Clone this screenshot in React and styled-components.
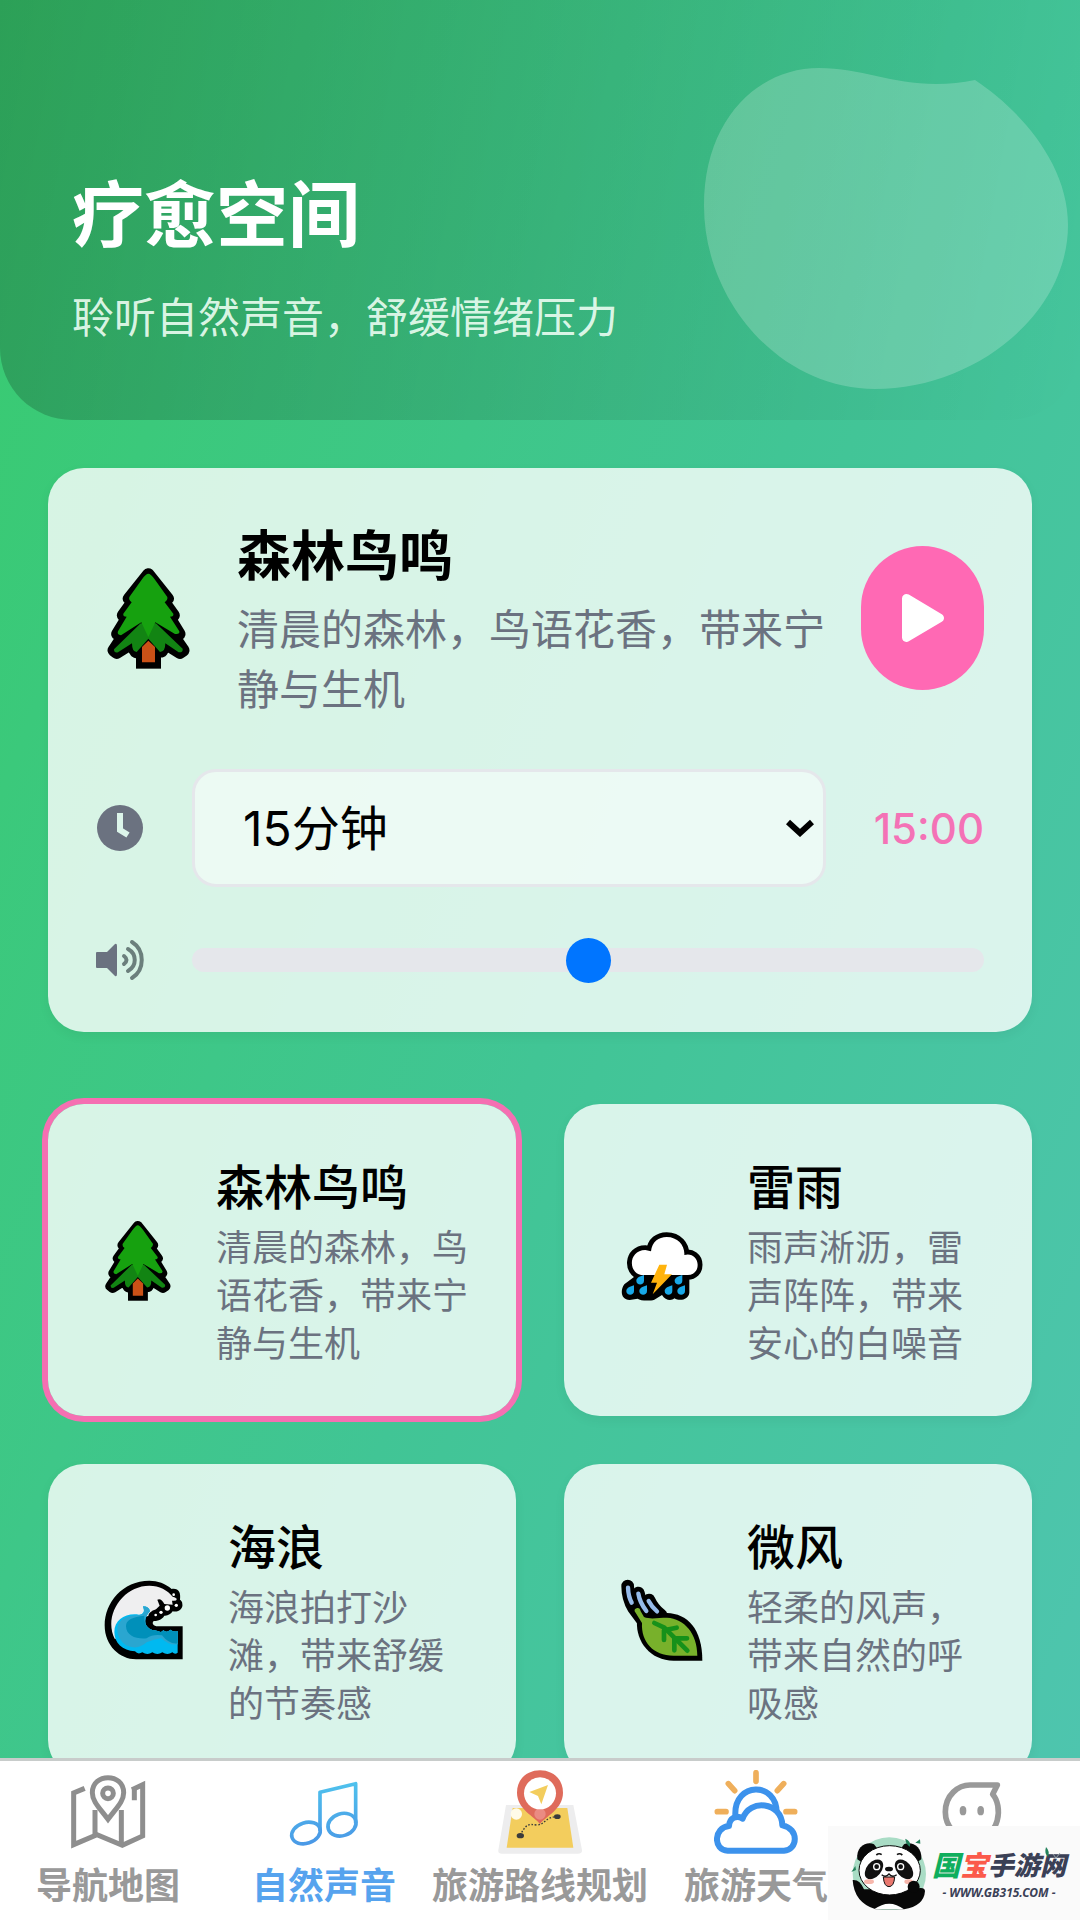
import React, { useState } from "react";
import styled, { createGlobalStyle } from "styled-components";
import { FaPlay } from "react-icons/fa";

const GlobalStyle = createGlobalStyle`
  * {
    box-sizing: border-box;
  }
  body {
    margin: 0;
    font-family: Inter, "Noto Sans CJK SC", sans-serif;
    color: #000;
  }
  h1, h2, h3, p {
    margin: 0;
  }
`;

const Page = styled.div`
  height: 100vh;
  display: flex;
  flex-direction: column;
  background: linear-gradient(112deg, #38cb6e 0%, #41c595 52%, #4fc5b0 100%);
`;

const Main = styled.main`
  flex: 1;
  min-height: 0;
  overflow-y: auto;
  scrollbar-width: none;
`;

const Header = styled.header`
  position: relative;
  padding: 170px 72px 72px;
  color: #fff;
  border-radius: 0 0 72px 72px;
  background: linear-gradient(100deg, rgba(0, 0, 0, 0.21), rgba(0, 0, 0, 0));
`;

const Blob = styled.svg`
  position: absolute;
  top: 68px;
  right: 12px;
  width: 364px;
  height: 321px;
`;

const Title = styled.h1`
  margin-bottom: 28px;
  font-size: 72px;
  line-height: 90px;
  font-weight: 700;
`;

const Subtitle = styled.p`
  font-size: 42px;
  line-height: 60px;
  color: rgba(240, 255, 245, 0.9);
`;

const Content = styled.div`
  display: flex;
  flex-direction: column;
  gap: 72px;
  padding: 48px;
`;

const Player = styled.section`
  display: flex;
  flex-direction: column;
  gap: 48px;
  padding: 48px;
  border-radius: 36px;
  background: rgba(255, 255, 255, 0.8);
  box-shadow: 0 4px 12px rgba(0, 0, 0, 0.05);
`;

const PlayerTop = styled.div`
  display: flex;
  align-items: center;
  gap: 36px;
`;

const Emoji = styled.div`
  flex: none;
  display: flex;
  justify-content: center;
  width: ${(props) => props.$width}px;
  svg {
    height: ${(props) => props.$height}px;
  }
`;

const PlayerText = styled.div`
  flex: 1;
`;

const PlayerName = styled.h2`
  margin-bottom: 2px;
  font-size: 54px;
  line-height: 82px;
  font-weight: 700;
`;

const PlayerDesc = styled.p`
  font-size: 42px;
  line-height: 60px;
  color: #6b7280;
`;

const PlayButton = styled.button`
  flex: none;
  display: flex;
  align-items: center;
  justify-content: center;
  width: 123px;
  height: 144px;
  padding: 0;
  border: none;
  border-radius: 999px;
  color: #fff;
  background: #ff69b4;
  cursor: pointer;
`;

const Row = styled.div`
  display: flex;
  align-items: center;
  gap: 48px;
  min-height: ${(props) => props.$height}px;
`;

const RowLabel = styled.label`
  flex: none;
  display: flex;
  width: 48px;
`;

const SelectBox = styled.div`
  flex: 1;
  position: relative;
  display: flex;
  svg {
    position: absolute;
    top: 50px;
    right: 12px;
    pointer-events: none;
  }
`;

const Select = styled.select`
  appearance: none;
  width: 100%;
  height: 118px;
  padding: 0 48px;
  border: 3px solid #e5e7eb;
  border-radius: 24px;
  font-family: inherit;
  font-size: 48px;
  color: #000;
  background: rgba(255, 255, 255, 0.5);
`;

const Time = styled.span`
  font-size: 42px;
  font-weight: 500;
  color: #f472b6;
`;

const Range = styled.input`
  appearance: none;
  flex: 1;
  min-width: 0;
  height: 24px;
  margin: 0;
  border-radius: 12px;
  background: #e5e7eb;
  &::-webkit-slider-thumb {
    appearance: none;
    width: 45px;
    height: 45px;
    border-radius: 50%;
    background: #0075ff;
  }
`;

const Grid = styled.section`
  display: grid;
  grid-template-columns: 1fr 1fr;
  gap: 48px;
`;

const Card = styled.button`
  display: flex;
  align-items: center;
  gap: 36px;
  padding: 48px;
  border: none;
  border-radius: 36px;
  font-family: inherit;
  text-align: left;
  color: #000;
  background: rgba(255, 255, 255, 0.8);
  box-shadow: ${(props) =>
    props.$active ? "0 0 0 6px #f56fb2" : "0 4px 12px rgba(0, 0, 0, 0.05)"};
  cursor: pointer;
`;

const CardText = styled.div`
  flex: 1;
`;

const CardName = styled.h3`
  font-size: 48px;
  line-height: 72px;
  font-weight: 500;
`;

const CardDesc = styled.p`
  font-size: 36px;
  line-height: 48px;
  color: #6b7280;
`;

const TabBar = styled.nav`
  flex: none;
  display: grid;
  grid-template-columns: repeat(5, 1fr);
  min-height: 162px;
  border-top: 3px solid #c8cccb;
  background: #fff;
`;

const Tab = styled.a`
  display: flex;
  flex-direction: column;
  align-items: center;
  gap: 8px;
  padding-top: 9px;
  font-size: 36px;
  line-height: 48px;
  font-weight: 700;
  white-space: nowrap;
  text-decoration: none;
  color: ${(props) => (props.$active ? "#56a3ee" : "#999")};
  svg {
    width: 84px;
    height: 84px;
  }
`;

const Brand = styled.aside`
  position: fixed;
  right: 0;
  bottom: 0;
  display: flex;
  align-items: center;
  gap: 4px;
  width: 252px;
  height: 94px;
  padding-left: 20px;
  background: #fafafa;
`;

const BrandLeaf = styled.svg`
  position: absolute;
  top: 20px;
  right: 18px;
`;

const BrandText = styled.div`
  display: flex;
  flex-direction: column;
  align-items: center;
  padding-top: 4px;
`;

const BrandName = styled.div`
  display: flex;
  align-items: center;
  font-size: 26px;
  line-height: 36px;
  font-weight: 900;
  font-style: italic;
  color: #3a4056;
`;

const BrandAccent = styled.span`
  font-size: 28px;
  color: ${(props) => props.color};
`;

const BrandUrl = styled.div`
  font-family: "Noto Sans", sans-serif;
  font-size: 12px;
  line-height: 18px;
  font-weight: 700;
  font-style: italic;
  color: #3a4056;
`;

function TreeIcon() {
  const crown =
    "M325 347 L383 420 L373 431 L401 470 L390 480 L418 526 L402 534 L430 575 L420 582 L378 556 L365 578 L345 558 H305 L288 580 L272 556 L230 582 L221 575 L248 534 L232 526 L260 480 L249 470 L277 431 L267 420 Z";
  return (
    <svg viewBox="201 325 248 306" aria-hidden="true">
      <path d={crown} fill="#000" stroke="#000" strokeWidth="37" strokeLinejoin="round" />
      <path d="M288 560 H363 V630 H288 Z" fill="#000" />
      <path
        d="M302 494 L222 572 Q222 584 234 581 L276 554 Q276 580 290 580 L325 540 L360 580 Q376 580 376 554 L416 581 Q430 582 428 570 L348 494 Z"
        fill="#128413"
      />
      <path
        d="M325 345 Q332 345 345 363 L382 415 Q384 424 374 431 L400 465 Q402 474 390 474 L418 518 Q420 528 405 526 L346 491 L325 536 L304 491 L243 530 Q230 528 234 518 L260 474 Q248 474 250 465 L275 431 Q265 424 268 415 L305 363 Q318 345 325 345 Z"
        fill="#16a10f"
      />
      <path d="M306 565 L325 546 L345 565 V611 H306 Z" fill="#ca5117" />
    </svg>
  );
}

function StormIcon() {
  const cloud =
    "M272 582 C233 574 234 508 285 507 L302 511 C305 482 325 468 349 468 C383 468 404 494 402 522 C423 515 442 530 442 551 C442 570 430 582 412 582 Z";
  const drops = [
    [270, 597],
    [240, 628],
    [279, 628],
    [385, 597],
    [355, 628],
    [393, 628],
  ];
  return (
    <svg viewBox="212 414 246 246" aria-hidden="true">
      <path d={cloud} fill="#000" stroke="#000" strokeWidth="29" />
      <path
        d="M262 580 L222 610 C208 630 213 656 238 657 L262 653 C270 660 300 660 312 656 L335 642 C345 660 365 659 372 652 C390 662 415 655 417 635 V580 Z"
        fill="#000"
      />
      <path d={cloud} fill="#fff" />
      {drops.map(([x, y]) => (
        <path
          key={`${x}-${y}`}
          transform={`translate(${x} ${y})`}
          d="M11 -15 V2 C11 17 -12 17 -12 2 C-12 -7 0 -12 11 -15 Z"
          fill="#18a8e8"
        />
      ))}
      <path d="M327 551 H350 L342 580 H365 L307 640 L320 605 H302 Z" fill="#ffb30d" />
    </svg>
  );
}

function WaveIcon() {
  return (
    <svg viewBox="224 412 238 240" aria-hidden="true">
      <path
        d="M460 551 H385 C373 551 366 542 373 535 C392 535 402 525 405 519 C416 520 425 514 430 506 C448 510 462 497 459 484 C459 477 456 474 452 471 C455 450 448 436 427 439 C408 422 385 414 360 414 C280 414 226 480 226 548 C226 610 272 650 320 650 H460 Z"
        fill="#000"
      />
      <path
        d="M360 429 C390 429 415 443 430 462 Q438 463 442 468 Q444 476 428 474 L430 486 L405 484 Q396 466 384 471 L391 489 L380 500 C365 505 358 512 357 520 L335 525 L257 590 C220 520 280 429 360 429 Z"
        fill="#efeff0"
      />
      <path
        d="M255 568 C255 530 290 510 329 516 Q350 515 341 491 Q359 491 362 506 C343 525 343 548 362 559 C372 564 380 562 388 566 Q396 571 402 563 Q412 572 423 561 Q435 570 445 565 V630 Q437 637 429 629 Q414 639 399 629 Q384 639 369 629 Q354 639 339 629 Q326 637 317 626 C279 624 255 600 255 568 Z"
        fill="#00b9f0"
      />
      <path
        d="M264 560 C264 533 292 516 329 518 C350 515 344 502 341 491 Q359 491 362 506 C343 525 343 548 362 559 C372 564 380 562 388 566 Q396 571 402 563 Q412 572 423 561 Q435 570 445 565 V605 Q420 610 396 586 Q374 590 352 599 Q325 624 290 608 Q264 590 264 560 Z"
        fill="#2aa6d0"
      />
      <path
        d="M290 550 C290 532 310 522 345 519 C344 540 350 552 362 559 C372 564 380 562 388 566 Q396 571 402 563 Q412 572 423 561 Q435 570 445 565 V602 Q420 606 398 578 Q370 574 352 587 C322 590 290 580 290 550 Z"
        fill="#0090ba"
      />
      <g fill="#fff">
        <circle cx="433" cy="456" r="4" />
        <circle cx="414" cy="496" r="8" />
        <circle cx="441" cy="488" r="5" />
        <circle cx="395" cy="509" r="5" />
        <circle cx="379" cy="517" r="4" />
      </g>
    </svg>
  );
}

function LeafIcon() {
  return (
    <svg viewBox="212 412 246 246" aria-hidden="true">
      <g stroke="#000" strokeWidth="38" strokeLinecap="round" fill="none">
        <path d="M232 433 Q232 470 250 500 L280 540" />
        <path d="M264 454 Q270 485 292 510" />
        <path d="M296 475 Q308 502 332 520" />
      </g>
      <path
        d="M262 516 L350 514 C410 516 456 560 456 657 H370 C300 657 256 600 260 538 Z"
        fill="#000"
      />
      <g stroke="#95bbea" strokeWidth="13" strokeLinecap="round" fill="none">
        <path d="M233 438 Q234 465 244 483" />
        <path d="M264 456 Q268 482 288 508" />
        <path d="M295 478 Q305 497 320 509" />
      </g>
      <path
        d="M261 499 Q269 498 271 509 L281 526 C300 534 325 528 350 528 C402 531 441 575 441 642 H370 C308 642 272 600 275 544 L253 509 Q251 501 261 499 Z"
        fill="#78b12b"
      />
      <g stroke="#16911a" strokeWidth="14" strokeLinecap="round" strokeLinejoin="round" fill="none">
        <path d="M312 544 L342 558 L411 627" />
        <path d="M341 595 V566 L379 558" />
        <path d="M372 626 V590 H410" />
      </g>
    </svg>
  );
}

function ClockIcon() {
  return (
    <svg viewBox="0 0 48 48" width="48" height="48" aria-hidden="true">
      <circle cx="24" cy="24" r="23" fill="#6b7280" />
      <path d="M24 9 V26 L32 31" fill="none" stroke="#dcf5ea" strokeWidth="6" />
    </svg>
  );
}

function VolumeIcon() {
  return (
    <svg viewBox="0 0 48 48" width="48" height="48" aria-hidden="true">
      <path d="M0 17 Q0 16 1 16 H11 L19 8 Q21 7 21 10 V38 Q21 41 19 40 L11 32 H1 Q0 32 0 31 Z" fill="#6b7280" />
      <g fill="none" stroke="#6b7f7c" strokeWidth="4" strokeLinecap="round">
        <path d="M28 20 Q33 24 28 28" />
        <path d="M32 13 C41 18 41 30 32 35" />
        <path d="M36 6 C49 14 49 34 36 42" />
      </g>
    </svg>
  );
}

function MapIcon() {
  return (
    <svg viewBox="198 60 252 252" aria-hidden="true">
      <g fill="none" stroke="#8e8e8e" strokeWidth="15">
        <path d="M254 115 L221 129 V284 L291 254 L367 286 L428 258 V104 L396 119" />
        <path d="M285 180 V256 M364 180 V284 M403 112 V151" />
        <path d="M324 208 C300 175 277 155 277 128 C277 68 371 68 371 128 C371 155 348 175 324 208 Z" />
        <circle cx="324" cy="130" r="16" />
      </g>
    </svg>
  );
}

function MusicIcon() {
  return (
    <svg viewBox="846 60 252 252" aria-hidden="true">
      <defs>
        <linearGradient id="music" x1="0" y1="90" x2="0" y2="290" gradientUnits="userSpaceOnUse">
          <stop offset="0" stopColor="#4fc3ed" />
          <stop offset="1" stopColor="#4a97e6" />
        </linearGradient>
      </defs>
      <g fill="none" stroke="url(#music)" strokeWidth="11" strokeLinejoin="round">
        <path d="M960 242 V127 L1067 101 V220" />
        <ellipse cx="918" cy="249" rx="44" ry="31" transform="rotate(-18 918 249)" />
        <ellipse cx="1026" cy="224" rx="43" ry="33" transform="rotate(-18 1026 224)" />
      </g>
    </svg>
  );
}

function RouteIcon() {
  return (
    <svg viewBox="234 60 252 252" aria-hidden="true">
      <path d="M258 165 H460 L486 300 Q487 311 474 311 H246 Q233 311 235 300 Z" fill="#ededee" />
      <path d="M278 174 H442 L460 293 H260 Z" fill="#f3cd5d" />
      <circle cx="289" cy="192" r="17" fill="#fffbe8" />
      <path
        d="M300 256 C320 220 325 222 350 225 C375 225 375 200 412 200"
        fill="none"
        stroke="#3b3b3b"
        strokeWidth="4"
        strokeDasharray="5 5"
      />
      <ellipse cx="301" cy="257" rx="11" ry="8" fill="#3b3b3b" />
      <ellipse cx="412" cy="200" rx="10" ry="7" fill="#3b3b3b" />
      <path
        d="M360 222 C345 200 291 178 291 128 C291 38 429 38 429 128 C429 178 375 200 360 222 Z"
        fill="#df6b5b"
      />
      <circle cx="360" cy="192" r="17" fill="#ea8b83" />
      <circle cx="360" cy="130" r="48" fill="#fff" />
      <path d="M384 105 L364 163 L354 138 L328 126 Z" fill="#f3cd5d" />
    </svg>
  );
}

function WeatherIcon() {
  return (
    <svg viewBox="882 60 252 252" aria-hidden="true">
      <g stroke="#efaf5b" strokeWidth="17" strokeLinecap="round">
        <path d="M1008 68 V94 M925 101 L944 122 M1091 101 L1072 122 M892 185 H918 M1098 185 H1124" />
      </g>
      <g fill="#fff" stroke="#3c92ec" strokeWidth="18" strokeLinejoin="round" strokeLinecap="round">
        <path d="M946 195 C942 94 1072 94 1070 190" />
        <path d="M923 302 C879 300 880 233 927 228 C928 206 948 193 968 206 C988 145 1085 155 1087 226 C1138 235 1134 300 1092 302 Z" />
      </g>
    </svg>
  );
}

function ProfileIcon() {
  return (
    <svg viewBox="330 60 252 252" aria-hidden="true">
      <path
        d="M456 266 C405 266 376 225 376 186 C376 135 415 105 450 105 H532 L518 133 C548 165 545 266 456 266 Z"
        fill="none"
        stroke="#999"
        strokeWidth="17"
        strokeLinejoin="round"
      />
      <ellipse cx="429" cy="182" rx="10" ry="14" fill="#999" />
      <ellipse cx="482" cy="182" rx="10" ry="14" fill="#999" />
    </svg>
  );
}

function PandaLogo() {
  return (
    <svg viewBox="82 270 240 222" width="80" height="74" aria-hidden="true">
      <circle cx="206" cy="384" r="110" fill="#a9dcc5" />
      <path d="M96 402 Q118 400 130 430 H280 Q312 420 313 435 Q310 480 250 490 H165 Q100 470 96 402 Z" fill="#080808" />
      <path d="M160 490 Q206 456 250 490 Z" fill="#fff" />
      <path d="M110 340 C105 300 140 285 160 295 L180 320 L125 350 Z" fill="#080808" />
      <path d="M302 340 C305 300 272 285 250 295 L232 320 L287 350 Z" fill="#080808" />
      <ellipse cx="207" cy="373" rx="92" ry="74" fill="#fff" stroke="#080808" strokeWidth="3" />
      <ellipse cx="160" cy="370" rx="22" ry="34" transform="rotate(40 160 370)" fill="#111" />
      <ellipse cx="250" cy="370" rx="22" ry="34" transform="rotate(-40 250 370)" fill="#111" />
      <g fill="#111" stroke="#fff" strokeWidth="4">
        <circle cx="168" cy="362" r="9" />
        <circle cx="240" cy="362" r="9" />
      </g>
      <ellipse cx="205" cy="369" rx="12" ry="7" fill="#111" />
      <path d="M183 386 Q195 396 205 384 Q215 396 228 386" fill="none" stroke="#111" strokeWidth="4" />
      <path d="M188 393 H222 Q220 422 205 422 Q190 422 188 393 Z" fill="#e9786f" stroke="#111" strokeWidth="3" />
      <ellipse cx="145" cy="407" rx="15" ry="7" fill="#f7b7ac" />
      <ellipse cx="264" cy="407" rx="13" ry="7" fill="#f7b7ac" />
      <path d="M167 327 Q175 320 183 326 M229 326 Q237 320 245 327" fill="none" stroke="#111" strokeWidth="5" />
      <circle cx="279" cy="422" r="18" fill="#080808" />
      <path d="M254 278 Q272 286 268 302 Q254 294 254 278 Z M92 378 L104 360 L106 372 Z M284 290 L298 280 L299 293 Z" fill="#23815b" />
    </svg>
  );
}

const sounds = [
  {
    id: "forest",
    name: "森林鸟鸣",
    desc: "清晨的森林，鸟语花香，带来宁静与生机",
    icon: TreeIcon,
    width: 84,
    height: 81,
  },
  {
    id: "storm",
    name: "雷雨",
    desc: "雨声淅沥，雷声阵阵，带来安心的白噪音",
    icon: StormIcon,
    width: 99,
    height: 82,
  },
  {
    id: "wave",
    name: "海浪",
    desc: "海浪拍打沙滩，带来舒缓的节奏感",
    icon: WaveIcon,
    width: 96,
    height: 80,
  },
  {
    id: "breeze",
    name: "微风",
    desc: "轻柔的风声，带来自然的呼吸感",
    icon: LeafIcon,
    width: 99,
    height: 82,
  },
];

const tabs = [
  { label: "导航地图", icon: MapIcon },
  { label: "自然声音", icon: MusicIcon, active: true },
  { label: "旅游路线规划", icon: RouteIcon },
  { label: "旅游天气", icon: WeatherIcon },
  { label: "", icon: ProfileIcon },
];

function App() {
  const [current, setCurrent] = useState(sounds[0]);
  const [minutes, setMinutes] = useState(15);
  const [volume, setVolume] = useState(50);
  const CurrentIcon = current.icon;

  return (
    <Page>
      <GlobalStyle />
      <Main>
        <Header>
          <Blob viewBox="0 0 364 321" aria-hidden="true">
            <path
              d="M271 12 C315 41 364 95 364 157 C364 247 270 321 171 321 C75 321 0 232 0 138 C0 50 55 0 115 0 C157 0 187 16 232 16 Q252 16 271 12 Z"
              fill="#fff"
              fillOpacity="0.2"
            />
          </Blob>
          <Title>疗愈空间</Title>
          <Subtitle>聆听自然声音，舒缓情绪压力</Subtitle>
        </Header>
        <Content>
          <Player>
            <PlayerTop>
              <Emoji $width={105} $height={102}>
                <CurrentIcon />
              </Emoji>
              <PlayerText>
                <PlayerName>{current.name}</PlayerName>
                <PlayerDesc>{current.desc}</PlayerDesc>
              </PlayerText>
              <PlayButton type="button" aria-label="播放">
                <FaPlay size={48} />
              </PlayButton>
            </PlayerTop>
            <Row $height={120}>
              <RowLabel htmlFor="duration" aria-label="定时">
                <ClockIcon />
              </RowLabel>
              <SelectBox>
                <Select
                  id="duration"
                  value={minutes}
                  onChange={(e) => setMinutes(Number(e.target.value))}
                >
                  <option value={15}>15分钟</option>
                  <option value={30}>30分钟</option>
                  <option value={60}>60分钟</option>
                </Select>
                <svg width="28" height="18" viewBox="0 0 28 18" aria-hidden="true">
                  <path d="M2 3 L14 14 L26 3" fill="none" stroke="#000" strokeWidth="6" />
                </svg>
              </SelectBox>
              <Time>{minutes}:00</Time>
            </Row>
            <Row $height={48}>
              <RowLabel htmlFor="volume" aria-label="音量">
                <VolumeIcon />
              </RowLabel>
              <Range
                id="volume"
                type="range"
                min="0"
                max="100"
                value={volume}
                onChange={(e) => setVolume(Number(e.target.value))}
              />
            </Row>
          </Player>
          <Grid>
            {sounds.map((sound) => (
              <Card
                key={sound.id}
                type="button"
                $active={sound.id === current.id}
                onClick={() => setCurrent(sound)}
              >
                <Emoji $width={sound.width} $height={sound.height}>
                  <sound.icon />
                </Emoji>
                <CardText>
                  <CardName>{sound.name}</CardName>
                  <CardDesc>{sound.desc}</CardDesc>
                </CardText>
              </Card>
            ))}
          </Grid>
        </Content>
      </Main>
      <TabBar>
        {tabs.map((tab, index) => (
          <Tab key={index} href="#" $active={tab.active}>
            <tab.icon />
            {tab.label}
          </Tab>
        ))}
      </TabBar>
      <Brand>
        <PandaLogo />
        <BrandText>
          <BrandName>
            <BrandAccent color="#0fae5d">国</BrandAccent>
            <BrandAccent color="#fb5a4b">宝</BrandAccent>
            手游网
          </BrandName>
          <BrandUrl>- WWW.GB315.COM -</BrandUrl>
        </BrandText>
        <BrandLeaf width="18" height="14" viewBox="0 0 18 14" aria-hidden="true">
          <path d="M2 1 Q6 5 4 11 Q0 7 2 1 Z" fill="#23815b" />
          <path d="M9 8 L12 12 L16 7" fill="none" stroke="#9aa5a8" strokeWidth="1" />
        </BrandLeaf>
      </Brand>
    </Page>
  );
}

export default App;
